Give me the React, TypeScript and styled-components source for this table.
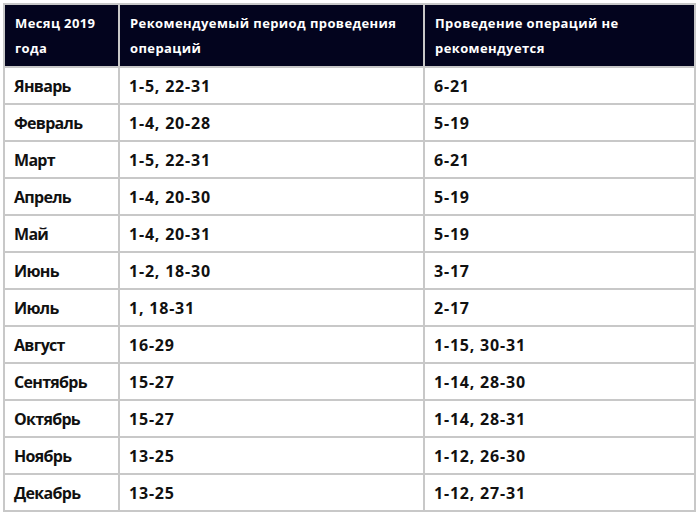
import styled, { createGlobalStyle } from "styled-components";

const GlobalStyle = createGlobalStyle`
  html, body {
    margin: 0;
    padding: 0;
    background: #ffffff;
  }
  body {
    font-family: "Open Sans", "DejaVu Sans", sans-serif;
  }
`;

const Page = styled.div`
  padding: 3px 0 0 3px;
`;

const Table = styled.table`
  border-collapse: collapse;
  table-layout: fixed;
  width: 691px;
  border: 2px solid #c8c8c8;
`;

const HeadCell = styled.th<{ $width: number }>`
  width: ${(p) => p.$width}px;
  height: 63px;
  box-sizing: border-box;
  background: #03041e;
  color: #ffffff;
  text-align: left;
  vertical-align: middle;
  padding: 0 10px;
  font-size: 13px;
  font-weight: 700;
  line-height: 25px;
  letter-spacing: 0.4px;
  border: 2px solid #c8c8c8;
  border-top: none;
`;

// month names in the reference are narrow, the day ranges wide
const Cell = styled.td<{ $numeric?: boolean }>`
  height: 37px;
  box-sizing: border-box;
  padding: 0 9px;
  font-size: 16px;
  font-weight: 700;
  letter-spacing: ${(p) => (p.$numeric ? "0.8px" : "-0.7px")};
  color: #111111;
  border: 2px solid #c8c8c8;
  vertical-align: middle;
  white-space: nowrap;
`;

const rows: [string, string, string][] = [
  ["Январь", "1-5, 22-31", "6-21"],
  ["Февраль", "1-4, 20-28", "5-19"],
  ["Март", "1-5, 22-31", "6-21"],
  ["Апрель", "1-4, 20-30", "5-19"],
  ["Май", "1-4, 20-31", "5-19"],
  ["Июнь", "1-2, 18-30", "3-17"],
  ["Июль", "1, 18-31", "2-17"],
  ["Август", "16-29", "1-15, 30-31"],
  ["Сентябрь", "15-27", "1-14, 28-30"],
  ["Октябрь", "15-27", "1-14, 28-31"],
  ["Ноябрь", "13-25", "1-12, 26-30"],
  ["Декабрь", "13-25", "1-12, 27-31"],
];

const App = () => {
  return (
    <Page>
      <GlobalStyle />
      <Table>
        <thead>
          <tr>
            <HeadCell $width={115}>
              Месяц 2019
              <br />
              года
            </HeadCell>
            <HeadCell $width={305}>
              Рекомендуемый период проведения
              <br />
              операций
            </HeadCell>
            <HeadCell $width={271}>
              Проведение операций не
              <br />
              рекомендуется
            </HeadCell>
          </tr>
        </thead>
        <tbody>
          {rows.map(([month, good, bad]) => (
            <tr key={month}>
              <Cell>{month}</Cell>
              <Cell $numeric>{good}</Cell>
              <Cell $numeric>{bad}</Cell>
            </tr>
          ))}
        </tbody>
      </Table>
    </Page>
  );
};

export default App;
